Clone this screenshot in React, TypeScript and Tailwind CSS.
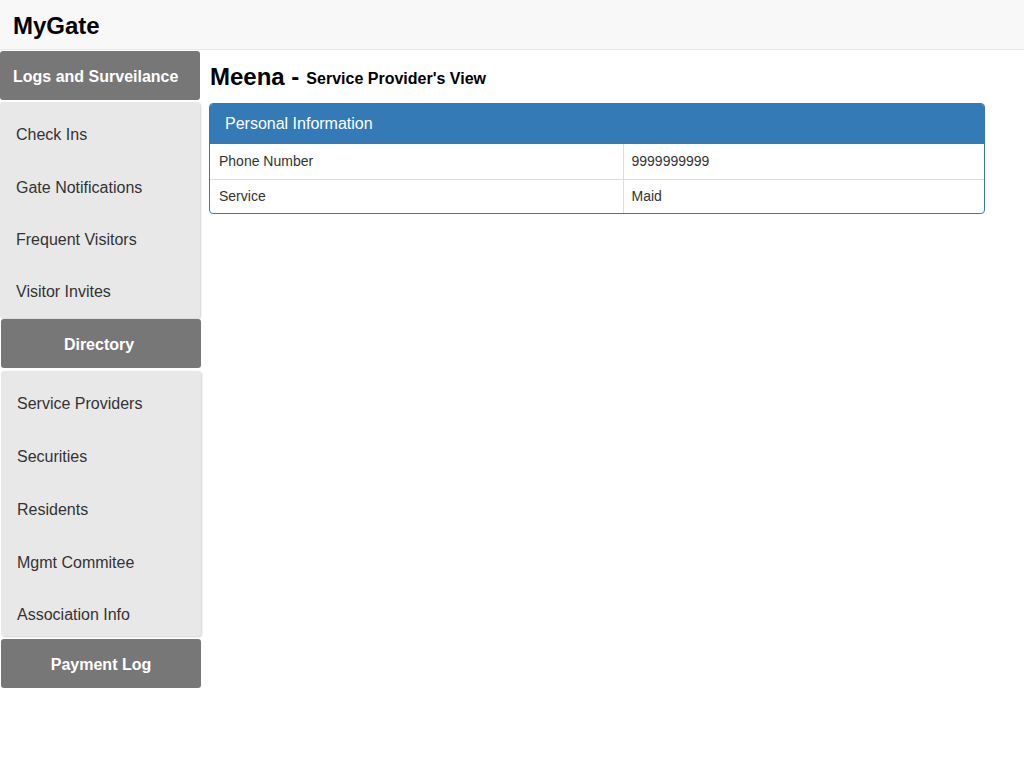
import React from "react";

const group1 = ["Check Ins", "Gate Notifications", "Frequent Visitors", "Visitor Invites"];
const group2 = ["Service Providers", "Securities", "Residents", "Mgmt Commitee", "Association Info"];

function NavButton({ label, className = "" }: { label: string; className?: string }) {
  return (
    <div
      className={`h-[49px] w-[200px] rounded-[3px] bg-[#777777] flex items-center pt-[2px] text-white font-bold text-[16px] ${className}`}
    >
      {label}
    </div>
  );
}

function NavPanel({ items, itemClass, className = "" }: { items: string[]; itemClass: string; className?: string }) {
  return (
    <div
      className={`w-[200px] rounded-[3px] bg-[#e8e8e8] pt-[7px] shadow-[1px_1px_2px_rgba(0,0,0,0.18)] ${className}`}
    >
      {items.map((it) => (
        <div key={it} className={`${itemClass} flex items-center pl-4 text-[16px] text-[#333333]`}>
          {it}
        </div>
      ))}
    </div>
  );
}

export default function App() {
  return (
    <div
      className="min-h-[768px] bg-white text-[#333333]"
      style={{ fontFamily: '"Liberation Sans", Arial, sans-serif' }}
    >
      <header className="h-[50px] bg-[#f8f8f8] border-b border-[#e7e7e7] flex items-center pl-[13px] pt-[2px]">
        <span className="text-[24px] font-bold text-black leading-none">MyGate</span>
      </header>
      <div className="flex">
        <aside className="w-[201px] shrink-0 flex flex-col">
          <NavButton label="Logs and Surveilance" className="mt-px justify-start pl-[13px]" />
          <NavPanel items={group1} itemClass="h-[52.4px]" className="mt-[2px] h-[216px]" />
          <NavButton label="Directory" className="mt-px ml-px justify-center pr-[4px]" />
          <NavPanel items={group2} itemClass="h-[52.75px]" className="mt-[3px] ml-px h-[265px]" />
          <NavButton label="Payment Log" className="mt-[3px] ml-px justify-center" />
        </aside>
        <main className="flex-1 pl-[9px]">
          <h1 className="mt-[13px] h-[26px] flex items-end text-black font-bold leading-none">
            <span className="text-[24px]">Meena -</span>
            <span className="text-[16px] ml-[7px] mb-[2px]">Service Provider's View</span>
          </h1>
          <div className="mt-[14px] -ml-px w-[776px] rounded-[4px] border border-[#337ab7] overflow-hidden bg-white">
            <div className="h-[40px] bg-[#337ab7] flex items-center pl-[15px] text-white text-[16px]">
              Personal Information
            </div>
            <table className="w-full border-collapse text-[14px] text-[#333333]">
              <tbody>
                <tr className="h-[35px]">
                  <td className="w-[413px] border-r border-b border-[#dddddd] pl-[9px] pt-[1px]">Phone Number</td>
                  <td className="border-b border-[#dddddd] pl-[8px] pt-[1px]">9999999999</td>
                </tr>
                <tr className="h-[34px]">
                  <td className="w-[413px] border-r border-[#dddddd] pl-[9px] pt-[1px]">Service</td>
                  <td className="pl-[8px] pt-[1px]">Maid</td>
                </tr>
              </tbody>
            </table>
          </div>
        </main>
      </div>
    </div>
  );
}
